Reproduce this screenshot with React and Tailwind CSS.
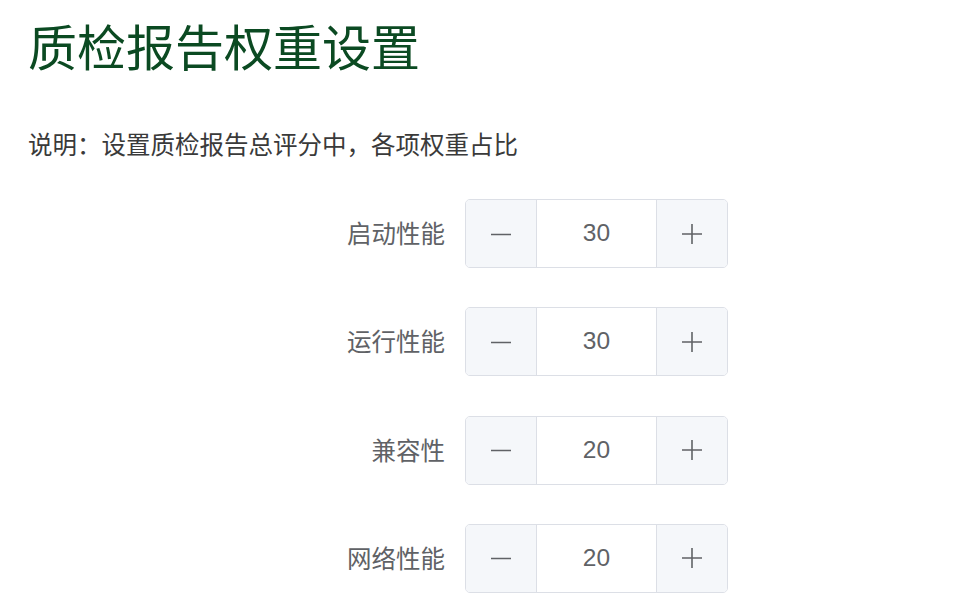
import { useState } from 'react';

const initialWeights = [
  { key: 'startup', label: '启动性能', value: 30 },
  { key: 'runtime', label: '运行性能', value: 30 },
  { key: 'compat', label: '兼容性', value: 20 },
  { key: 'network', label: '网络性能', value: 20 },
];

const cjk = { fontFamily: "'Noto Sans CJK SC', 'Noto Sans', sans-serif" };

function Stepper({ value, onChange }) {
  return (
    <div className="flex h-[69px] w-[263px] rounded-[5px] border border-[#dcdfe6] bg-white overflow-hidden">
      <button
        onClick={() => onChange(value - 1)}
        className="w-[71px] h-full bg-[#f5f7fa] border-r border-[#dcdfe6] flex items-center justify-center text-[#606266]"
      >
        <svg width="20" height="20" viewBox="0 0 20 20">
          <path d="M0 10.5 H20" stroke="currentColor" strokeWidth="1.6" />
        </svg>
      </button>
      <div
        className="flex-1 flex items-center justify-center text-[24.5px] text-[#606266]"
        style={{ fontFamily: "'Liberation Sans', Arial, sans-serif" }}
      >
        {value}
      </div>
      <button
        onClick={() => onChange(value + 1)}
        className="w-[71px] h-full bg-[#f5f7fa] border-l border-[#dcdfe6] flex items-center justify-center text-[#606266]"
      >
        <svg width="20" height="20" viewBox="0 0 20 20">
          <path d="M0 10 H20 M10 0 V20" stroke="currentColor" strokeWidth="1.6" />
        </svg>
      </button>
    </div>
  );
}

export default function App() {
  const [weights, setWeights] = useState(initialWeights);

  const update = (key, v) =>
    setWeights((prev) => prev.map((w) => (w.key === key ? { ...w, value: v } : w)));

  return (
    <div className="min-h-screen bg-white pl-[28px] pt-[21px]" style={cjk}>
      <h1 className="text-[49px] leading-[48px] text-[#0b4a22] font-normal">质检报告权重设置</h1>

      <p className="mt-[62px] text-[24.5px] leading-[25px] text-[#3a3a3a]">
        说明：设置质检报告总评分中，各项权重占比
      </p>

      {/* weight items */}
      <div className="mt-[43px] flex flex-col gap-[39.3px]">
        {weights.map((w) => (
          <div key={w.key} className="flex items-center">
            <label className="w-[437px] pr-[20px] text-right text-[24.5px] text-[#606266]">{w.label}</label>
            <Stepper value={w.value} onChange={(v) => update(w.key, v)} />
          </div>
        ))}
      </div>
    </div>
  );
}
